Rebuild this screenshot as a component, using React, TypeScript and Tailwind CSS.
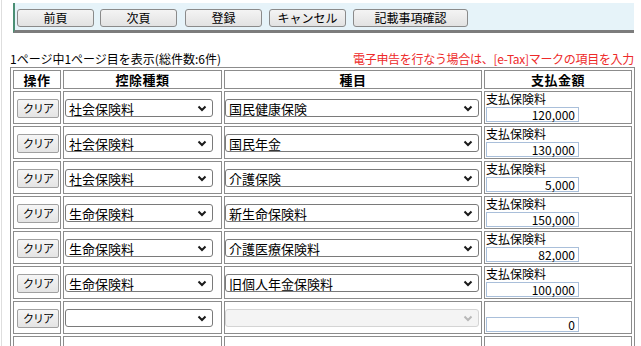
import React from "react";

const rows = [
  { kind: "社会保険料", item: "国民健康保険", amount: "120,000", label: true },
  { kind: "社会保険料", item: "国民年金", amount: "130,000", label: true },
  { kind: "社会保険料", item: "介護保険", amount: "5,000", label: true },
  { kind: "生命保険料", item: "新生命保険料", amount: "150,000", label: true },
  { kind: "生命保険料", item: "介護医療保険料", amount: "82,000", label: true },
  { kind: "生命保険料", item: "旧個人年金保険料", amount: "100,000", label: true },
  { kind: "", item: "", amount: "0", label: false, disabled: true },
];

const Chevron = ({ light }: { light?: boolean }) => (
  <svg width="10" height="7" viewBox="0 0 10 7" className="shrink-0">
    <polyline
      points="1.5,1.5 5,5 8.5,1.5"
      fill="none"
      stroke={light ? "#b8b8b8" : "#1a1a1a"}
      strokeWidth="2"
    />
  </svg>
);

const Select = ({ value, width, disabled }: { value: string; width: string; disabled?: boolean }) => (
  <div
    className={`${width} h-[18px] flex items-center justify-between pl-[3px] pr-[5px] rounded-[3px] border text-[13px] leading-none ${
      disabled ? "border-[#d4d4d4] bg-[#f4f4f4]" : "border-[#7a7a7a] bg-white"
    }`}
  >
    <span className="whitespace-nowrap">{value}</span>
    <Chevron light={disabled} />
  </div>
);

const ToolButton = ({ label, w }: { label: string; w: string }) => (
  <button className={`${w} h-[18px] rounded-[3px] border border-[#8a8a8a] bg-gradient-to-b from-[#f4f4f4] to-[#e2e2e2] text-[12px] leading-none text-black`}>
    {label}
  </button>
);

export default function App() {
  return (
    <div className="w-[641px] h-[346px] overflow-hidden bg-white text-black font-['Noto_Sans_CJK_JP',sans-serif]">
      <div className="h-full ml-[1px] border-l border-[#dedede]">
        <div className="pt-[3px] pl-[11px]">
          <div className="w-[621px] h-[30px] bg-[#e6f3f9] border-l-2 border-l-[#4a8f74] border-b-[3px] border-b-[#7c7c7c] flex items-start gap-[6px] pl-[2px] pt-[6px]">
            <ToolButton label="前頁" w="w-[77px]" />
            <ToolButton label="次頁" w="w-[77px]" />
            <div className="ml-[2px] flex gap-[7px]">
              <ToolButton label="登録" w="w-[77px]" />
              <ToolButton label="キャンセル" w="w-[77px]" />
              <ToolButton label="記載事項確認" w="w-[115px]" />
            </div>
          </div>
        </div>

        <div className="mt-[18px] ml-[8px] w-[624px] h-[16px] flex text-[12px] leading-[16px] whitespace-nowrap">
          <span className="shrink-0">1ページ中1ページ目を表示(総件数:6件)</span>
          <span className="ml-auto tracking-[-0.3px] text-[#ee2a2a]">電子申告を行なう場合は、[e-Tax]マークの項目を入力</span>
        </div>

        <table className="ml-[8px] table-fixed border-separate border-spacing-[2px] border border-[#8c8c8c] w-[625px] leading-none">
          <colgroup>
            <col className="w-[48px]" />
            <col className="w-[159px]" />
            <col className="w-[258px]" />
            <col className="w-[148px]" />
          </colgroup>
          <thead>
            <tr>
              {["操作", "控除種類", "種目", "支払金額"].map((h) => (
                <th key={h} className="h-[19px] p-0 border border-[#8c8c8c] text-center text-[13px] font-bold leading-[15px] tracking-[0.5px]">
                  {h}
                </th>
              ))}
            </tr>
          </thead>
          <tbody>
            {rows.map((r, i) => (
              <tr key={i}>
                <td className="h-[33px] p-0 pl-[3px] pt-[7px] align-top border border-[#8c8c8c]">
                  <button className="block w-[42px] h-[19px] rounded-[2px] border border-[#a0a0a0] bg-gradient-to-b from-[#f6f6f6] to-[#e4e4e4] text-[11px] leading-none tracking-[-1px]">
                    クリア
                  </button>
                </td>
                <td className="p-0 pl-[1px] pt-[7px] align-top border border-[#8c8c8c]">
                  <Select value={r.kind} width="w-[148px]" />
                </td>
                <td className="p-0 pt-[7px] align-top border border-[#8c8c8c]">
                  <Select value={r.item} width="w-[254px]" disabled={r.disabled} />
                </td>
                <td className="p-0 pl-[1px] align-top border border-[#8c8c8c]">
                  <div className="h-[14px] text-[12px] leading-[14px] whitespace-nowrap">{r.label ? "支払保険料" : ""}</div>
                  <div className="mt-[1px] w-[93px] h-[15px] border border-[#a9bfda] bg-white text-right text-[12px] leading-[13px] pr-[3px]">
                    {r.amount}
                  </div>
                </td>
              </tr>
            ))}
            <tr>
              <td className="h-[33px] p-0 border border-[#8c8c8c]"></td>
              <td className="p-0 border border-[#8c8c8c]"></td>
              <td className="p-0 border border-[#8c8c8c]"></td>
              <td className="p-0 border border-[#8c8c8c]"></td>
            </tr>
          </tbody>
        </table>
      </div>
    </div>
  );
}
